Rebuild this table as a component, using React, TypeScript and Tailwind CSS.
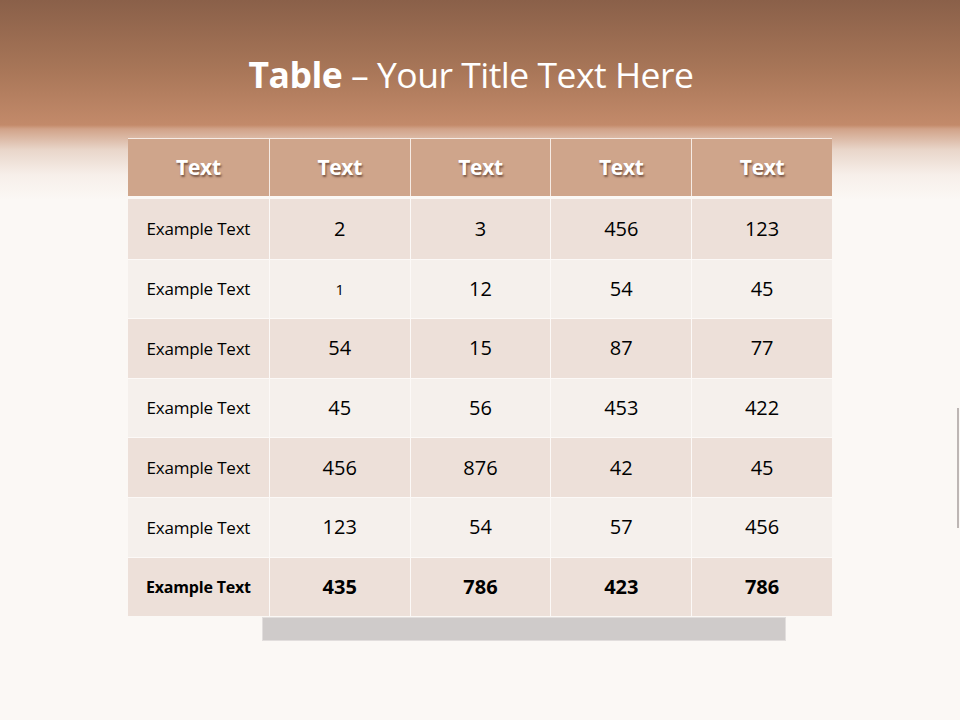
import React from "react";

const rows: { label: string; vals: string[]; bold?: boolean }[] = [
  { label: "Example Text", vals: ["2", "3", "456", "123"] },
  { label: "Example Text", vals: ["1", "12", "54", "45"] },
  { label: "Example Text", vals: ["54", "15", "87", "77"] },
  { label: "Example Text", vals: ["45", "56", "453", "422"] },
  { label: "Example Text", vals: ["456", "876", "42", "45"] },
  { label: "Example Text", vals: ["123", "54", "57", "456"] },
  { label: "Example Text", vals: ["435", "786", "423", "786"], bold: true },
];

export default function App() {
  return (
    <div
      className="relative w-[960px] h-[720px] overflow-hidden bg-[linear-gradient(to_bottom,#8a6049_0px,#a87658_70px,#c38a6a_125px,#d1a389_129px,#e9d6ca_150px,#f7efea_175px,#fbf8f5_200px,#fbf8f5_100%)]"
      style={{ fontFamily: '"Open Sans", "Liberation Sans", sans-serif' }}
    >
      <div className="h-[138px] flex items-start justify-center pt-[50px] pr-[18px]">
        <h1 className="text-white text-[35.5px] leading-[48px] tracking-[-0.5px]">
          <span className="font-bold">Table</span> – Your Title Text Here
        </h1>
      </div>
      <div className="ml-[128px] w-[704px]">
        <div className="grid grid-cols-5 h-[58px] bg-[#cfa58b] border-t border-[#f6ebe4]">
          {[0, 1, 2, 3, 4].map((i) => (
            <div
              key={i}
              className={`flex items-center justify-center text-white font-bold text-[21px] tracking-[-0.3px] [text-shadow:1px_2px_2px_rgba(60,30,20,0.6)] ${i > 0 ? "border-l border-[#f6ebe4]" : ""}`}
            >
              Text
            </div>
          ))}
        </div>
        <div className="h-[3px] bg-[#fbf8f5]" />
        {rows.map((r, ri) => (
          <div
            key={ri}
            className={`grid grid-cols-5 h-[59.6px] ${ri % 2 === 0 ? "bg-[#ede0d9]" : "bg-[#f5f0ec]"} ${ri > 0 ? "border-t border-[#fcf9f7]" : ""}`}
          >
            <div
              className={`flex items-center justify-center text-black ${r.bold ? "font-bold text-[16px] tracking-[-0.2px]" : "text-[17px] tracking-[-0.2px]"}`}
            >
              {r.label}
            </div>
            {r.vals.map((v, vi) => (
              <div
                key={vi}
                className={`flex items-center justify-center border-l border-[#fcf9f7] text-black ${r.bold ? "font-bold text-[20px]" : v === "1" ? "text-[15px]" : "text-[20px]"}`}
              >
                {v}
              </div>
            ))}
          </div>
        ))}
        <div className="ml-[134px] w-[524px] h-[24px] mt-[1px] bg-[#cfcbca] border border-[#e2dedd]" />
      </div>
      <div className="absolute right-[1px] top-[408px] w-[2px] h-[120px] bg-[#bdb6b4]" />
    </div>
  );
}
